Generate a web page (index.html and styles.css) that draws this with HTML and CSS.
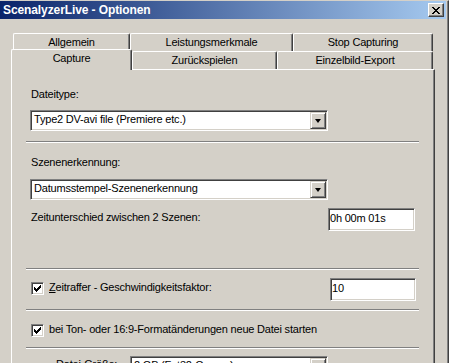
FILE: index.html
```html
<!DOCTYPE html>
<html lang="de">
<head>
    <meta charset="UTF-8">
    <title>ScenalyzerLive - Optionen</title>
    <link rel="stylesheet" href="styles.css">
</head>
<body>
    <div class="window">
        <div class="titlebar">
            <span class="title">ScenalyzerLive - Optionen</span>
            <span class="close-btn">
                <svg width="8" height="7" viewBox="0 0 8 7" shape-rendering="crispEdges">
                    <rect x="0" y="0" width="2" height="1"/><rect x="6" y="0" width="2" height="1"/>
                    <rect x="1" y="1" width="2" height="1"/><rect x="5" y="1" width="2" height="1"/>
                    <rect x="2" y="2" width="4" height="1"/>
                    <rect x="3" y="3" width="2" height="1"/>
                    <rect x="2" y="4" width="4" height="1"/>
                    <rect x="1" y="5" width="2" height="1"/><rect x="5" y="5" width="2" height="1"/>
                    <rect x="0" y="6" width="2" height="1"/><rect x="6" y="6" width="2" height="1"/>
                </svg>
            </span>
        </div>

        <div class="tabs">
            <div class="tab-row back">
                <div class="tab tab-allgemein">Allgemein</div>
                <div class="tab tab-leistung">Leistungsmerkmale</div>
                <div class="tab tab-stop">Stop Capturing</div>
            </div>
            <div class="tab-row front">
                <div class="tab active tab-capture">Capture</div>
                <div class="tab tab-zurueck">Zurückspielen</div>
                <div class="tab tab-export">Einzelbild-Export</div>
            </div>
        </div>

        <div class="panel">
            <p class="label label-first">Dateitype:</p>
            <div class="combo combo-type">
                <span class="combo-text">Type2 DV-avi file (Premiere etc.)</span>
                <span class="combo-btn"><span class="arrow"></span></span>
            </div>

            <div class="sep sep-1"></div>

            <p class="label label-scene">Szenenerkennung:</p>
            <div class="combo combo-scene">
                <span class="combo-text">Datumsstempel-Szenenerkennung</span>
                <span class="combo-btn"><span class="arrow"></span></span>
            </div>

            <div class="row row-time">
                <span class="label row-label">Zeitunterschied zwischen 2 Szenen:</span>
                <span class="field field-time">0h 00m 01s</span>
            </div>

            <div class="sep sep-2"></div>

            <div class="row row-zeit">
                <span class="check check-zeit">
                    <svg width="7" height="7" viewBox="0 0 7 7" shape-rendering="crispEdges">
                        <rect x="0" y="2" width="1" height="3"/><rect x="1" y="3" width="1" height="3"/>
                        <rect x="2" y="4" width="1" height="3"/><rect x="3" y="3" width="1" height="3"/>
                        <rect x="4" y="2" width="1" height="3"/><rect x="5" y="1" width="1" height="3"/>
                        <rect x="6" y="0" width="1" height="3"/>
                    </svg>
                </span>
                <span class="label check-label-zeit"><span class="u">Z</span>eitraffer - Geschwindigkeitsfaktor:</span>
                <span class="field field-factor">10</span>
            </div>

            <div class="sep sep-3"></div>

            <div class="row row-ton">
                <span class="check">
                    <svg width="7" height="7" viewBox="0 0 7 7" shape-rendering="crispEdges">
                        <rect x="0" y="2" width="1" height="3"/><rect x="1" y="3" width="1" height="3"/>
                        <rect x="2" y="4" width="1" height="3"/><rect x="3" y="3" width="1" height="3"/>
                        <rect x="4" y="2" width="1" height="3"/><rect x="5" y="1" width="1" height="3"/>
                        <rect x="6" y="0" width="1" height="3"/>
                    </svg>
                </span>
                <span class="label check-label-ton">bei Ton- oder 16:9-Formatänderungen neue Datei starten</span>
            </div>

            <div class="sep sep-4"></div>

            <div class="row row-size">
                <span class="label size-label">Datei-Größe:</span>
                <div class="combo combo-size">
                    <span class="combo-text">2 GB (Fat32-Grenze)</span>
                    <span class="combo-btn"><span class="arrow"></span></span>
                </div>
            </div>
        </div>
    </div>
</body>
</html>
```

FILE: styles.css
```css
* {
    margin: 0;
    padding: 0;
    box-sizing: border-box;
}

body {
    width: 449px;
    height: 363px;
    overflow: hidden;
    background: #d4d0c8;
    font-family: "Liberation Sans", Arial, sans-serif;
    font-size: 11px;
    letter-spacing: -0.2px;
    color: #000;
}

.window {
    width: 449px;
    height: 363px;
    border-top: 1px solid #d4d0c8;
    border-right: 1px solid #404040;
    box-shadow: inset -1px 0 #808080;
}

/* title bar */
.titlebar {
    display: flex;
    align-items: center;
    height: 18px;
    margin-right: 2px;
    background: linear-gradient(to right, #0a246a, #a6caf0);
}

.title {
    flex: 1;
    padding-left: 3px;
    color: #fff;
    font-weight: bold;
    font-size: 12px;
    letter-spacing: -0.1px;
    white-space: nowrap;
}

.close-btn {
    display: flex;
    align-items: center;
    justify-content: center;
    width: 16px;
    height: 14px;
    margin-right: 2px;
    background: #d4d0c8;
    border-top: 1px solid #fff;
    border-left: 1px solid #fff;
    border-right: 1px solid #404040;
    border-bottom: 1px solid #404040;
    box-shadow: inset -1px -1px #808080;
}

/* tabs */
.tabs {
    padding-top: 14px;
}

.tab-row {
    display: flex;
}

.tab-row.back {
    height: 18px;
    margin-left: 13px;
}

.tab-row.front {
    height: 20px;
    margin-left: 11px;
    margin-top: -2px;
    align-items: flex-end;
}

.tab {
    height: 18px;
    padding-top: 2px;
    line-height: 13px;
    text-align: center;
    white-space: nowrap;
    background: #d4d0c8;
    border-top: 1px solid #fff;
    border-left: 1px solid #fff;
    border-right: 1px solid #404040;
    border-radius: 2px 2px 0 0;
    box-shadow: inset -1px 0 #808080;
}

.tab.active {
    position: relative;
    z-index: 1;
    height: 21px;
    margin-bottom: -1px;
}

.tab-allgemein { width: 117px; }
.tab-leistung { width: 163px; }
.tab-stop { width: 140px; }
.tab-capture { width: 121px; }
.tab-zurueck { width: 145px; }
.tab-export { width: 156px; }

/* panel */
.panel {
    width: 424px;
    height: 300px;
    margin-left: 11px;
    padding: 0 19px;
    border-top: 1px solid #fff;
    border-left: 1px solid #fff;
    border-right: 1px solid #404040;
    box-shadow: inset -1px 0 #808080;
}

.label {
    line-height: 13px;
    white-space: nowrap;
}

.label-first { margin-top: 18px; }
.label-scene { margin-top: 13px; }

.combo {
    display: flex;
    width: 298px;
    height: 21px;
    padding: 1px;
    background: #fff;
    border-top: 1px solid #808080;
    border-left: 1px solid #808080;
    border-right: 1px solid #fff;
    border-bottom: 1px solid #fff;
    box-shadow: inset 1px 1px #404040, inset -1px -1px #d4d0c8;
}

.combo-type { margin-top: 9px; margin-left: -1px; }
.combo-scene { margin-top: 10px; margin-left: -1px; }

.combo-text {
    flex: 1;
    padding-left: 2px;
    line-height: 15px;
    white-space: nowrap;
    overflow: hidden;
}

.combo-btn {
    display: flex;
    align-items: center;
    justify-content: center;
    width: 16px;
    height: 17px;
    background: #d4d0c8;
    border-top: 1px solid #d4d0c8;
    border-left: 1px solid #d4d0c8;
    border-right: 1px solid #404040;
    border-bottom: 1px solid #404040;
    box-shadow: inset 1px 1px #fff, inset -1px -1px #808080;
}

.arrow {
    width: 0;
    height: 0;
    border-left: 3.5px solid transparent;
    border-right: 3.5px solid transparent;
    border-top: 4px solid #000;
}

.sep {
    width: 393px;
    height: 2px;
    margin-left: -5px;
    border-top: 1px solid #808080;
    border-bottom: 1px solid #fff;
}

.sep-1 { margin-top: 10px; }
.sep-2 { margin-top: 37px; }
.sep-3 { margin-top: 8px; }
.sep-4 { margin-top: 10px; }

.row {
    display: flex;
    align-items: flex-start;
}

.field {
    height: 23px;
    padding-left: 1px;
    padding-top: 1px;
    line-height: 16px;
    background: #fff;
    border-top: 1px solid #808080;
    border-left: 1px solid #808080;
    border-right: 1px solid #fff;
    border-bottom: 1px solid #fff;
    box-shadow: inset 1px 1px #404040, inset -1px -1px #d4d0c8;
}

.row-time { margin-top: 8px; }
.row-time .row-label { margin-top: 3px; }

.field-time {
    width: 87px;
    margin-left: auto;
}

.row-zeit { margin-top: 8px; }

.field-factor {
    width: 86px;
    margin-left: auto;
    margin-right: -1px;
}

.check {
    display: flex;
    align-items: center;
    justify-content: center;
    width: 13px;
    height: 13px;
    background: #fff;
    border-top: 1px solid #808080;
    border-left: 1px solid #808080;
    border-right: 1px solid #fff;
    border-bottom: 1px solid #fff;
    box-shadow: inset 1px 1px #404040, inset -1px -1px #d4d0c8;
}

.check-zeit { margin-top: 4px; }

.check-label-zeit {
    margin-top: 3px;
    margin-left: 5px;
}

.u { text-decoration: underline; }

.row-ton { margin-top: 13px; }

.check-label-ton {
    margin-top: -1px;
    margin-left: 5px;
}

.row-size {
    width: 297px;
    margin-top: 7px;
}

.size-label {
    margin-left: 25px;
    margin-top: 2px;
}

.combo-size {
    width: 198px;
    margin-left: auto;
}
```
